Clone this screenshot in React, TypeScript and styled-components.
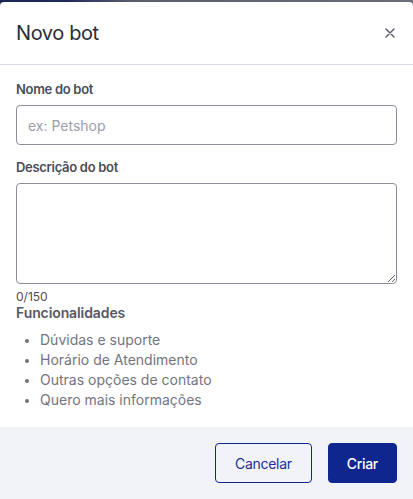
import React from "react";
import styled, { createGlobalStyle } from "styled-components";

const Global = createGlobalStyle`
  html, body { margin: 0; padding: 0; }
  body {
    width: 413px;
    height: 499px;
    overflow: hidden;
    font-family: Inter, "Noto Sans", sans-serif;
    background: linear-gradient(90deg, #1c2759 0%, #1f2a5c 16%, #5a5e6e 32%, #6b6e79 100%);
  }
`;

const Modal = styled.div`
  margin-top: 2px;
  width: 413px;
  height: 497px;
  background: #ffffff;
  border-radius: 4px 4px 0 0;
  display: flex;
  flex-direction: column;
  overflow: hidden;
`;

const Header = styled.div`
  height: 62px;
  padding: 0 16px;
  display: flex;
  align-items: center;
  justify-content: space-between;
  border-bottom: 1px solid #d9dce4;
`;

const Title = styled.h1`
  margin: 0;
  font-size: 20px;
  font-weight: 400;
  color: #2b2d36;
  letter-spacing: -0.4px;
`;

const CloseButton = styled.button`
  border: none;
  background: none;
  padding: 0;
  width: 14px;
  height: 14px;
  display: flex;
  align-items: center;
  justify-content: center;
  color: #555866;
  cursor: pointer;
`;

const Body = styled.div`
  padding: 16px 16px 0;
  flex: 1;
  display: flex;
  flex-direction: column;
`;

const Label = styled.label<{ $mt?: number }>`
  display: block;
  margin-top: ${(p) => p.$mt ?? 0}px;
  margin-bottom: 8px;
  font-size: 13px;
  line-height: 16px;
  font-weight: 600;
  color: #4a4d5a;
  letter-spacing: -0.3px;
`;

const Input = styled.input`
  box-sizing: border-box;
  width: 100%;
  height: 40px;
  border: 1px solid #8c8f9b;
  border-radius: 4px;
  padding: 0 11px;
  font-family: inherit;
  font-size: 14px;
  color: #2b2d36;
  outline: none;
  &::placeholder { color: #9c9ea9; }
`;

const TextArea = styled.textarea`
  box-sizing: border-box;
  width: 100%;
  height: 101px;
  border: 1px solid #8c8f9b;
  border-radius: 4px;
  padding: 8px 11px;
  font-family: inherit;
  font-size: 14px;
  outline: none;
  display: block;
  resize: vertical;
`;

const Counter = styled.div`
  margin-top: 5px;
  font-size: 12px;
  line-height: 16px;
  color: #4a4d5a;
`;

const SectionTitle = styled.div`
  font-size: 14px;
  line-height: 16px;
  font-weight: 600;
  color: #555866;
  letter-spacing: -0.1px;
`;

const List = styled.ul`
  margin: 9px 0 0;
  padding-left: 24px;
`;

const Item = styled.li`
  font-size: 14px;
  line-height: 20px;
  color: #72747f;
  &::marker { color: #72747f; font-size: 12px; }
`;

const Footer = styled.div`
  height: 72px;
  box-sizing: border-box;
  background: #f2f3f7;
  padding: 16px;
  display: flex;
  justify-content: flex-end;
  gap: 16px;
`;

const Button = styled.button<{ $primary?: boolean }>`
  height: 40px;
  box-sizing: border-box;
  padding: 0 ${(p) => (p.$primary ? 18 : 19)}px;
  border-radius: 4px;
  font-family: inherit;
  font-size: 14px;
  font-weight: ${(p) => (p.$primary ? 500 : 400)};
  letter-spacing: -0.3px;
  border: 1px solid #10268f;
  background: ${(p) => (p.$primary ? "#10268f" : "transparent")};
  color: ${(p) => (p.$primary ? "#ffffff" : "#1c2d99")};
  cursor: pointer;
`;

export default function App() {
  const items = [
    "Dúvidas e suporte",
    "Horário de Atendimento",
    "Outras opções de contato",
    "Quero mais informações",
  ];
  return (
    <>
      <Global />
      <Modal>
        <Header>
          <Title>Novo bot</Title>
          <CloseButton aria-label="Fechar">
            <svg width="10" height="10" viewBox="0 0 10 10" fill="none">
              <path d="M1 1L9 9M9 1L1 9" stroke="currentColor" strokeWidth="1.4" strokeLinecap="round" />
            </svg>
          </CloseButton>
        </Header>
        <Body>
          <Label>Nome do bot</Label>
          <Input placeholder="ex: Petshop" />
          <Label $mt={14}>Descrição do bot</Label>
          <TextArea />
          <Counter>0/150</Counter>
          <SectionTitle>Funcionalidades</SectionTitle>
          <List>
            {items.map((t) => (
              <Item key={t}>{t}</Item>
            ))}
          </List>
        </Body>
        <Footer>
          <Button>Cancelar</Button>
          <Button $primary>Criar</Button>
        </Footer>
      </Modal>
    </>
  );
}
